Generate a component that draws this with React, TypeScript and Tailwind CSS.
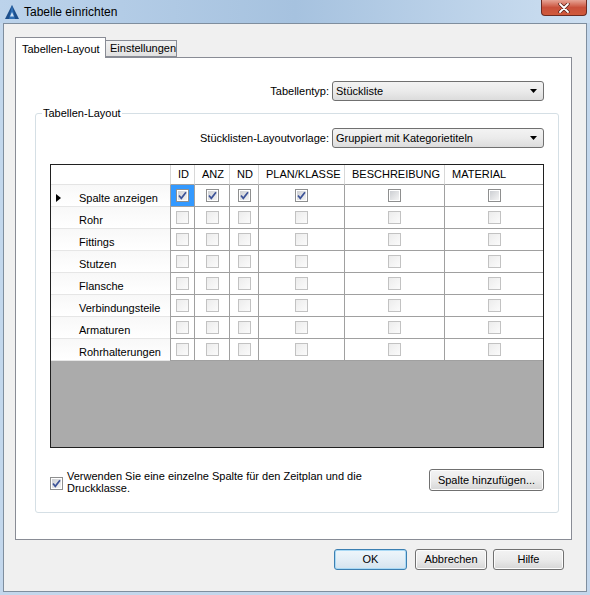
import React from "react";

const font = "font-['Liberation_Sans',Arial,sans-serif]";

type Row = { label: string; checks: boolean[]; active?: boolean };

const columns = [
  { name: "ID", w: "w-[24px]" },
  { name: "ANZ", w: "w-[35px]" },
  { name: "ND", w: "w-[29px]" },
  { name: "PLAN/KLASSE", w: "w-[86px]" },
  { name: "BESCHREIBUNG", w: "w-[100px]" },
  { name: "MATERIAL", w: "w-[99px]" },
];

const rows: Row[] = [
  { label: "Spalte anzeigen", checks: [true, true, true, true, false, false], active: true },
  { label: "Rohr", checks: [false, false, false, false, false, false] },
  { label: "Fittings", checks: [false, false, false, false, false, false] },
  { label: "Stutzen", checks: [false, false, false, false, false, false] },
  { label: "Flansche", checks: [false, false, false, false, false, false] },
  { label: "Verbindungsteile", checks: [false, false, false, false, false, false] },
  { label: "Armaturen", checks: [false, false, false, false, false, false] },
  { label: "Rohrhalterungen", checks: [false, false, false, false, false, false] },
];

function Check({ checked, light }: { checked?: boolean; light?: boolean }) {
  return (
    <span
      className={
        light
          ? "flex h-[13px] w-[13px] items-center justify-center border border-[#c2c2c2] bg-gradient-to-br from-[#ececec] to-[#fbfbfb]"
          : "flex h-[13px] w-[13px] items-center justify-center border border-[#8e8f8f] bg-white"
      }
    >
      {!light && (
        <span className="flex h-[9px] w-[9px] items-center justify-center bg-gradient-to-br from-[#cdcfd3] to-[#f4f4f4]">
          {checked && (
            <svg width="11" height="11" viewBox="0 0 11 11" className="shrink-0">
              <path d="M2 5.5 L4.3 8.3 L9 2.2" fill="none" stroke="#3d5398" strokeWidth="1.7" />
            </svg>
          )}
        </span>
      )}
    </span>
  );
}

function Combo({ value }: { value: string }) {
  return (
    <div className="flex h-[20px] w-[212px] items-center justify-between rounded-[3px] border border-[#707070] bg-gradient-to-b from-[#f3f3f3] via-[#ebebeb] to-[#dcdcdc] pl-[3px] pr-[6px]">
      <span>{value}</span>
      <svg width="7" height="4" viewBox="0 0 7 4">
        <path d="M0 0 H7 L3.5 4 Z" fill="#000" />
      </svg>
    </div>
  );
}

function Button({ label, w, focused }: { label: string; w: string; focused?: boolean }) {
  return (
    <button
      className={`${w} flex items-center justify-center rounded-[3px] border ${
        focused
          ? "border-[#3c7fb1] bg-gradient-to-b from-[#eef6fb] via-[#e3eef6] to-[#d4e3ee] shadow-[inset_0_0_0_1px_#a9d9f5]"
          : "border-[#707070] bg-gradient-to-b from-[#f3f3f3] via-[#ebebeb] to-[#d6d6d6] shadow-[inset_0_0_0_1px_#fcfcfc]"
      }`}
    >
      {label}
    </button>
  );
}

function Grid() {
  return (
    <div className="flex h-[284px] w-[494px] flex-col border border-[#202020] bg-[#ababab]">
      <div className="flex h-[20px] bg-white">
        <div className="w-[119px] border-b border-[#e4e4e4]" />
        {columns.map((c) => (
          <div
            key={c.name}
            className={`${c.w} flex items-center border-b border-l border-b-[#a0a0a0] border-l-[#d8d8d8] pl-[7px]`}
          >
            {c.name}
          </div>
        ))}
      </div>
      {rows.map((r, ri) => (
        <div key={r.label} className="flex h-[22px] bg-white">
          <div className="flex w-[119px] items-center border-b border-[#e6e6e6] bg-gradient-to-b from-[#f8f8f8] to-white pt-[5px]">
            <span className="flex w-[28px] pl-[5px]">
              {r.active && (
                <svg width="5" height="8" viewBox="0 0 5 8">
                  <path d="M0 0 L5 4 L0 8 Z" fill="#000" />
                </svg>
              )}
            </span>
            <span>{r.label}</span>
          </div>
          {columns.map((c, ci) => (
            <div
              key={c.name}
              className={`${c.w} flex items-center justify-center border-b border-l border-[#a0a0a0] ${
                ri === 0 && ci === 0 ? "bg-[#3399ff]" : ""
              }`}
            >
              <Check checked={r.checks[ci]} light={ri > 0} />
            </div>
          ))}
        </div>
      ))}
      <div className="flex-1" />
    </div>
  );
}

export default function App() {
  return (
    <div className={`${font} flex h-[595px] w-[590px] flex-col bg-[#c3d7ec] text-[11px] text-black`}>
      {/* title bar */}
      <div className="flex h-[23px] shrink-0 bg-gradient-to-r from-[#bcd3eb] via-[#a6c2df] to-[#cddff1]">
        <div className="flex items-center pl-[4px]">
          <svg width="16" height="16" viewBox="0 0 16 16">
            <path d="M8 1 L15 15 H1 Z" fill="#1d4f8c" />
            <path d="M8 1 L11 15 H5 Z" fill="#2f6fb5" />
            <path d="M8 8 L10 12.5 H6 Z" fill="#cfe2f5" />
          </svg>
          <span className="ml-[4px] text-[12px]">Tabelle einrichten</span>
        </div>
        <div className="ml-auto mr-[3px] flex h-[16px] w-[46px] items-center justify-center rounded-b-[4px] border border-t-0 border-[#6b2b22] bg-gradient-to-b from-[#e6a496] via-[#c9503b] to-[#d05a3b]">
          <svg width="12" height="10" viewBox="0 0 12 10">
            <path d="M2 1 L10 9 M10 1 L2 9" stroke="#5a231c" strokeWidth="3.4" strokeLinecap="round" />
            <path d="M2 1 L10 9 M10 1 L2 9" stroke="#fff" strokeWidth="1.8" strokeLinecap="round" />
          </svg>
        </div>
      </div>

      {/* client */}
      <div className="mx-[3px] mb-[3px] flex flex-1 flex-col border border-[#7f8e9e] bg-[#f0f0f0]">
        <div className="ml-[11px] mt-[13px] flex h-[20px] items-end">
          <div className="relative z-10 -mb-px flex h-[21px] w-[91px] items-start border border-b-0 border-[#898c95] bg-white pl-[6px] pt-[3px]">
            Tabellen-Layout
          </div>
          <div className="flex h-[17px] w-[71px] items-center border border-l-0 border-[#898c95] bg-gradient-to-b from-[#f2f2f2] to-[#e1e1e1] pl-[4px]">
            Einstellungen
          </div>
        </div>

        <div className="ml-[11px] flex h-[483px] w-[557px] flex-col border border-[#898c95] bg-white">
          <div className="mt-[23px] flex items-center justify-end pr-[27px]">
            <span className="mr-[3px]">Tabellentyp:</span>
            <Combo value="Stückliste" />
          </div>

          <div className="relative ml-[19px] mr-[12px] mt-[12px] flex h-[400px] flex-col rounded-[3px] border border-[#d5dfe5]">
            <span className="absolute -top-[7px] left-[6px] bg-white px-[1px] leading-[13px]">Tabellen-Layout</span>
            <div className="mt-[14px] flex items-center justify-end pr-[14px]">
              <span className="mr-[3px]">Stücklisten-Layoutvorlage:</span>
              <Combo value="Gruppiert mit Kategorietiteln" />
            </div>

            <div className="ml-[14px] mt-[16px]">
              <Grid />
            </div>

            <div className="ml-[14px] mr-[14px] mt-[21px] flex items-start justify-between">
              <div className="flex items-start">
                <span className="mt-[8px]">
                  <Check checked />
                </span>
                <span className="ml-[4px] mt-[1px] w-[330px] leading-[12px]">
                  Verwenden Sie eine einzelne Spalte für den Zeitplan und die Druckklasse.
                </span>
              </div>
              <div className="h-[22px]">
                <Button label="Spalte hinzufügen..." w="w-[115px] h-[22px]" />
              </div>
            </div>
          </div>
        </div>

        <div className="mt-[9px] flex justify-end pr-[22px]">
          <Button label="OK" w="w-[73px] h-[21px]" focused />
          <span className="w-[8px]" />
          <Button label="Abbrechen" w="w-[72px] h-[21px]" />
          <span className="w-[6px]" />
          <Button label="Hilfe" w="w-[71px] h-[21px]" />
        </div>
      </div>
    </div>
  );
}
